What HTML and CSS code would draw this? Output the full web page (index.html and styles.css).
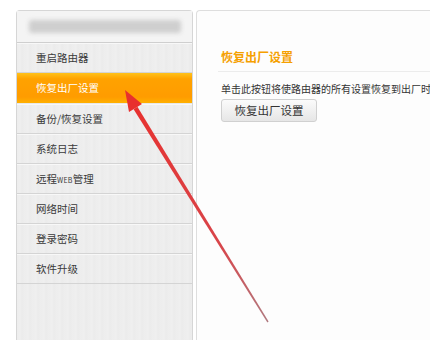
FILE: index.html
```html
<!DOCTYPE html>
<html>
<head>
    <meta charset="utf-8">
    <title>恢复出厂设置</title>
    <link rel="stylesheet" href="styles.css">
</head>
<body>
    <div class="page">
        <div class="sidebar">
            <div class="sidebar-head"><span class="blur-bar"></span></div>
            <ul class="menu">
                <li>重启路由器</li>
                <li class="active">恢复出厂设置</li>
                <li>备份/恢复设置</li>
                <li>系统日志</li>
                <li>远程<span class="small">WEB</span>管理</li>
                <li>网络时间</li>
                <li>登录密码</li>
                <li>软件升级</li>
            </ul>
        </div>
        <div class="content">
            <h2 class="title">恢复出厂设置</h2>
            <p class="desc">单击此按钮将使路由器的所有设置恢复到出厂时</p>
            <button class="btn">恢复出厂设置</button>
        </div>
    </div>

    <!-- annotation arrow -->
    <svg class="arrow" width="430" height="340" viewBox="0 0 430 340">
        <defs>
            <linearGradient id="fade" x1="268" y1="322" x2="130" y2="100" gradientUnits="userSpaceOnUse">
                <stop offset="0" stop-color="#b07a80"/>
                <stop offset="0.35" stop-color="#d8454a"/>
                <stop offset="1" stop-color="#e8302e"/>
            </linearGradient>
        </defs>
        <polygon points="268.6,321.6 267.4,322.4 133.6,109.2 137.4,106.8" fill="url(#fade)"/>
        <polygon points="125,90 142,104 129,112" fill="#e8302e"/>
    </svg>
</body>
</html>
```

FILE: styles.css
```css
body {
    margin: 0;
    background: #fff;
    font-family: "Noto Sans CJK SC", "Noto Sans", sans-serif;
    color: #333;
    width: 430px;
    height: 340px;
    overflow: hidden;
    position: relative;
}
.page {
    display: flex;
    gap: 3px;
    padding: 10px 0 0 16px;
    height: 330px;
}
.sidebar {
    width: 175px;
    flex: none;
    border: 1px solid #d6d6d6;
    border-bottom: none;
    border-radius: 4px 4px 0 0;
    background: repeating-linear-gradient(90deg, #ededed 0, #efefef 3px, #ebebeb 5px, #eeeeee 8px);
}
.sidebar-head {
    height: 31px;
    border-bottom: 1px solid #cfcfcf;
    display: flex;
    align-items: center;
    padding-left: 12px;
    background: #f4f4f4;
}
.blur-bar {
    display: block;
    width: 152px;
    height: 13px;
    background: #cfcfcf;
    border-radius: 3px;
    filter: blur(2px);
}
.menu {
    list-style: none;
    margin: 0;
    padding: 0;
}
.menu li {
    height: 29px;
    line-height: 29px;
    padding-left: 19px;
    font-size: 10.5px;
    color: #3a3a3a;
    border-bottom: 1px solid #d4d4d4;
    box-shadow: inset 0 1px 0 #f8f8f8;
}
.menu li.active {
    height: 30px;
    line-height: 30px;
    color: #fff;
    background: linear-gradient(#ffc21a 0, #ffa200 20%, #ff9c00 80%, #ffb000 100%);
    border-bottom: 1px solid #e8e8e8;
    box-shadow: none;
}
.small {
    font-size: 7px;
    letter-spacing: 0.3px;
}
.content {
    flex: 1;
    border: 1px solid #dedede;
    border-right: none;
    border-bottom: none;
    border-radius: 4px 0 0 0;
    background: #fdfdfd;
    padding: 36px 0 0 21px;
    overflow: hidden;
}
.title {
    margin: 0;
    padding: 0 0 4px 3px;
    font-size: 12px;
    font-weight: bold;
    color: #f5a000;
    border-bottom: 1px solid #ececec;
    line-height: 20px;
}
.desc {
    margin: 10px 0 0 3px;
    font-size: 10px;
    line-height: 14px;
    white-space: nowrap;
    color: #333;
}
.btn {
    margin: 2px 0 0 3px;
    width: 96px;
    height: 23px;
    padding: 0;
    font-family: inherit;
    font-size: 11.5px;
    color: #333;
    border: 1px solid #d0d0d0;
    border-radius: 3px;
    background: linear-gradient(#fbfbfb, #e6e6e6);
}
.arrow {
    position: absolute;
    left: 0;
    top: 0;
}
```
